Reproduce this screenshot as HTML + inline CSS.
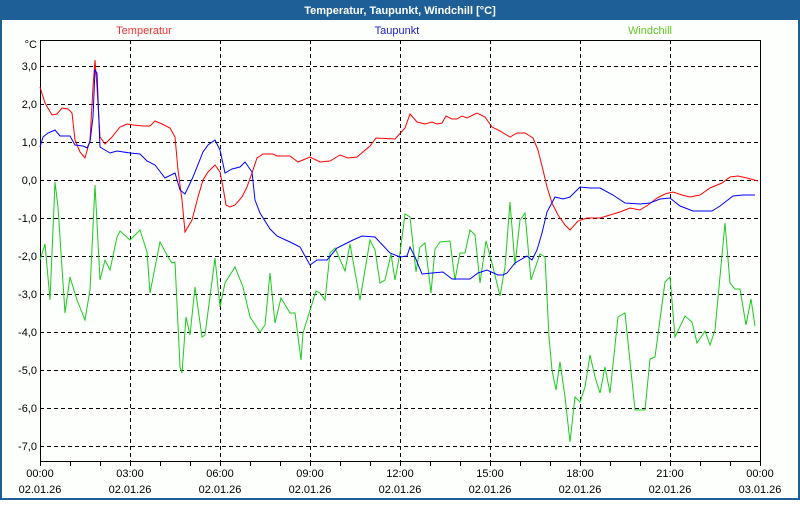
<!DOCTYPE html><html><head><style>
body{margin:0;width:800px;height:500px;overflow:hidden;background:#fff;font-family:"Liberation Sans",sans-serif}
</style></head><body>
<svg width="800" height="500" xmlns="http://www.w3.org/2000/svg" font-family="Liberation Sans, sans-serif" font-size="11">
<rect x="0" y="0" width="800" height="500" fill="#1d5f96"/>
<rect x="2" y="20" width="796" height="478" fill="#fdfffd"/>
<text x="400" y="14" fill="#fff" font-weight="bold" text-anchor="middle">Temperatur, Taupunkt, Windchill [°C]</text>
<text x="144" y="34" fill="#f03030" text-anchor="middle">Temperatur</text>
<text x="397" y="34" fill="#2020d0" text-anchor="middle">Taupunkt</text>
<text x="650" y="34" fill="#60c820" text-anchor="middle">Windchill</text>
<g stroke="#000" stroke-dasharray="4,3" stroke-width="1">
<path d="M40 66.5H760M40 104.5H760M40 142.5H760M40 180.5H760M40 218.5H760M40 256.5H760M40 294.5H760M40 332.5H760M40 370.5H760M40 408.5H760M40 446.5H760"/>
<path d="M130.5 40V461M220.5 40V461M310.5 40V461M400.5 40V461M490.5 40V461M580.5 40V461M670.5 40V461"/>
</g>
<rect x="40.5" y="40.5" width="720" height="421" fill="none" stroke="#000" stroke-width="1"/>
<path stroke="#000" d="M40.5 461V466M70.5 461V466M100.5 461V466M130.5 461V466M160.5 461V466M190.5 461V466M220.5 461V466M250.5 461V466M280.5 461V466M310.5 461V466M340.5 461V466M370.5 461V466M400.5 461V466M430.5 461V466M460.5 461V466M490.5 461V466M520.5 461V466M550.5 461V466M580.5 461V466M610.5 461V466M640.5 461V466M670.5 461V466M700.5 461V466M730.5 461V466M760.5 461V466"/>
<g text-anchor="end" fill="#000">
<text x="37" y="48">°C</text>
<text x="37" y="70">3,0</text><text x="37" y="108">2,0</text><text x="37" y="146">1,0</text><text x="37" y="184">0,0</text>
<text x="37" y="222">-1,0</text><text x="37" y="260">-2,0</text><text x="37" y="298">-3,0</text><text x="37" y="336">-4,0</text>
<text x="37" y="374">-5,0</text><text x="37" y="412">-6,0</text><text x="37" y="450">-7,0</text>
</g>
<g text-anchor="middle" fill="#000">
<text x="40" y="477">00:00</text><text x="40" y="493">02.01.26</text>
<text x="130" y="477">03:00</text><text x="130" y="493">02.01.26</text>
<text x="220" y="477">06:00</text><text x="220" y="493">02.01.26</text>
<text x="310" y="477">09:00</text><text x="310" y="493">02.01.26</text>
<text x="400" y="477">12:00</text><text x="400" y="493">02.01.26</text>
<text x="490" y="477">15:00</text><text x="490" y="493">02.01.26</text>
<text x="580" y="477">18:00</text><text x="580" y="493">02.01.26</text>
<text x="670" y="477">21:00</text><text x="670" y="493">02.01.26</text>
<text x="760" y="477">00:00</text><text x="760" y="493">03.01.26</text>
</g>
<g fill="none" stroke-width="1">
<polyline stroke="#1ec81e" points="40,260 45,244 50,300 55,182 58,207 65,313 70,277 77,300 85,320 90,290 95,185 100,280 105,260 110,270 117,237 120,231 130,240 140,230 147,252 150,293 160,242 168,257 172,263 175,262 180,367 182,373 186,317 190,335 195,287 202,337 205,335 215,258 220,307 225,283 235,267 243,287 250,317 260,332 265,325 270,273 275,323 281,298 290,313 295,313 301,360 303,333 307,320 316,291 320,293 325,300 330,253 335,248 345,271 350,244 360,300 370,240 375,250 380,283 385,280 391,254 395,280 400,253 405,214 410,217 416,272 420,247 425,243 431,293 435,249 440,242 450,241 455,280 460,253 465,253 470,230 475,235 480,283 486,241 492,263 500,296 505,267 510,202 515,265 520,220 525,213 531,280 540,254 545,257 549,337 552,370 556,390 560,362 565,397 570,442 575,397 580,402 585,387 590,355 595,377 600,393 605,367 610,393 618,317 625,313 635,410 645,410 650,359 655,357 665,282 670,277 675,337 685,316 692,322 697,343 705,331 710,345 715,330 725,223 730,283 735,289 740,289 746,325 751,299 755,326"/>
<polyline stroke="#ff0000" points="40,87 45,103 52,115 57,114 62,108 68,109 72,113 75,140 80,152 85,158 90,140 93,87 95,60 97,87 100,137 105,144 112,137 120,127 127,124 133,125 143,126 150,126 155,121 162,124 170,128 175,137 178,170 182,200 185,232 192,220 198,197 203,180 208,172 215,165 220,172 223,187 226,205 230,207 235,205 242,197 247,187 252,173 257,158 263,154 273,154 277,156 290,156 298,162 310,157 320,162 330,161 340,155 348,158 357,157 370,146 376,138 395,139 405,128 410,114 417,122 425,124 432,122 437,124 442,123 446,116 452,119 457,119 462,116 467,118 477,113 485,117 492,127 500,131 510,137 517,133 525,133 533,138 538,150 543,170 547,187 552,203 558,215 565,225 570,230 578,221 587,218 600,218 610,215 620,212 630,208 640,210 648,205 657,198 665,194 673,192 682,195 690,197 700,195 710,188 722,183 730,177 738,176 747,178 758,181"/>
<polyline stroke="#0000ff" points="40,147 43,137 48,133 55,130 60,136 70,136 75,145 83,146 87,148 90,142 93,117 95,70 97,73 100,147 110,153 117,151 130,153 140,154 147,161 155,165 165,178 175,173 180,190 185,194 193,177 203,152 208,145 215,140 220,150 225,173 232,169 240,167 245,162 252,172 255,200 260,213 270,229 277,236 290,242 300,247 310,265 317,260 327,260 337,248 347,243 353,240 362,236 375,237 390,253 400,257 407,256 410,247 415,257 422,274 432,273 443,272 452,279 470,279 478,273 487,270 498,275 503,275 507,273 515,263 527,256 532,260 537,250 542,233 547,212 555,197 563,199 570,197 580,187 590,188 600,188 613,195 625,203 640,204 650,203 660,199 670,198 680,206 693,211 712,211 720,206 733,196 743,195 755,195"/>
</g>
</svg>
</body></html>
